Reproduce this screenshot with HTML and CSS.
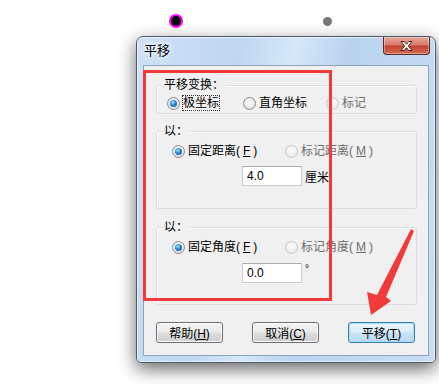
FILE: index.html
```html
<!DOCTYPE html>
<html lang="zh-CN">
<head>
  <meta charset="UTF-8" />
  <title>平移</title>
  <link rel="stylesheet" href="styles.css">
</head>
<body>
  <span class="dot dot-sel"></span>
  <span class="dot dot-grey"></span>

  <div class="window">
    <div class="titlebar">
      <span class="title">平移</span>
      <span class="close">
        <svg width="15" height="12" viewBox="0 0 15 12"><path d="M2 1.5h3.2l2.3 2.8 2.3-2.8H13l-3.7 4.5L13 10.5H9.8L7.5 7.7 5.2 10.5H2l3.7-4.5z" fill="#fff" stroke="#4a2520" stroke-width="1"/></svg>
      </span>
    </div>

    <div class="client">
      <div class="group g1">
        <span class="legend">平移变换：</span>
        <div class="row">
          <label class="opt w76"><span class="radio on"></span><span class="focus">极坐标</span></label>
          <label class="opt w83"><span class="radio"></span>直角坐标</label>
          <label class="opt off"><span class="radio"></span>标记</label>
        </div>
      </div>

      <div class="group g2">
        <span class="legend">以：</span>
        <div class="row r2">
          <label class="opt w113"><span class="radio on"></span>固定距离(<u>F</u>)</label>
          <label class="opt off"><span class="radio"></span>标记距离(<u>M</u>)</label>
        </div>
        <div class="field">
          <input type="text" value="4.0">
          <span class="unit">厘米</span>
        </div>
      </div>

      <div class="group g3">
        <span class="legend">以：</span>
        <div class="row r2">
          <label class="opt w113"><span class="radio on"></span>固定角度(<u>F</u>)</label>
          <label class="opt off"><span class="radio"></span>标记角度(<u>M</u>)</label>
        </div>
        <div class="field f3">
          <input type="text" value="0.0">
          <span class="unit deg">°</span>
        </div>
      </div>

      <div class="buttons">
        <button>帮助(<u>H</u>)</button>
        <button>取消(<u>C</u>)</button>
        <button class="default">平移(<u>T</u>)</button>
      </div>
    </div>
  </div>

  <!-- annotation drawn over the screenshot -->
  <div class="mark"></div>
  <svg class="arrow" width="439" height="384" viewBox="0 0 439 384">
    <polygon points="411,229 414,231 386,297 391,301 371,315 367,292 377,295" fill="#f23a3a"/>
  </svg>
</body>
</html>
```

FILE: styles.css
```css
body {
  margin: 0;
  width: 439px;
  height: 384px;
  background: #fff;
  font-family: "Liberation Sans", "Noto Sans CJK SC", sans-serif;
  font-size: 12px;
  color: #000;
  position: relative;
  overflow: hidden;
}
.dot {
  position: absolute;
  border-radius: 50%;
}
.dot-sel {
  left: 169px;
  top: 14px;
  width: 10px;
  height: 10px;
  background: #000;
  border: 2px solid #f0f;
}
.dot-grey {
  left: 323px;
  top: 17px;
  width: 9px;
  height: 9px;
  background: #777;
}

.window {
  margin: 36px 0 0 136px;
  width: 300px;
  height: 327px;
  box-sizing: border-box;
  border: 1px solid #4c5a6a;
  border-radius: 7px 7px 5px 5px;
  background: linear-gradient(100deg, #cfe2f6 0%, #bfd7f1 30%, #d6e8f9 45%, #b9d3ef 60%, #c9def4 100%);
  box-shadow: 0 6px 18px rgba(0,0,0,0.6), inset 0 0 0 1px rgba(255,255,255,0.6);
  padding: 0 6px 6px;
}
.titlebar {
  height: 28px;
  display: flex;
  justify-content: space-between;
  align-items: flex-start;
}
.title {
  margin: 6px 0 0 1px;
  line-height: 16px;
  font-size: 13px;
  text-shadow: 0 0 6px #fff, 0 0 3px #fff;
}
.close {
  width: 45px;
  height: 17px;
  margin-right: -1px;
  border: 1px solid #5a2a24;
  border-top: 0;
  border-radius: 0 0 4px 4px;
  background: linear-gradient(#e9a99b 0%, #d87a69 45%, #c04530 55%, #d56b55 100%);
  box-shadow: inset 0 0 0 1px rgba(255,255,255,0.35);
  display: flex;
  align-items: center;
  justify-content: center;
}
.client {
  height: 291px;
  box-sizing: border-box;
  background: #f0f0f0;
  border: 1px solid #8ea3bd;
  padding: 19px 0 0 12px;
}

.group {
  position: relative;
  width: 261px;
  box-sizing: border-box;
  border: 1px solid #d9dde2;
  border-radius: 3px;
  box-shadow: inset 1px 1px 0 #fff;
}
.legend {
  position: absolute;
  top: -9px;
  left: 5px;
  padding: 0 2px;
  background: #f0f0f0;
  line-height: 16px;
}
.g1 { height: 29px; padding: 9px 0 0 10px; }
.g2 { height: 78px; margin-top: 17px; padding: 11px 0 0 15px; }
.g3 { height: 78px; margin-top: 18px; padding: 11px 0 0 15px; }

.row {
  display: flex;
  height: 16px;
  line-height: 16px;
}
.opt {
  display: flex;
  align-items: center;
  gap: 3px;
  white-space: nowrap;
}
.w76 { width: 76px; }
.w83 { width: 83px; }
.w113 { width: 113px; }
.off { color: #6d6d6d; }
u { text-decoration: underline; text-underline-offset: 1px; }

.radio {
  width: 11px;
  height: 11px;
  border-radius: 50%;
  border: 1px solid #8b8d8f;
  background: radial-gradient(circle at 50% 40%, #fdfdfd, #d5d7d9);
  position: relative;
  flex: none;
}
.radio.on::after {
  content: "";
  position: absolute;
  left: 2px;
  top: 2px;
  width: 7px;
  height: 7px;
  border-radius: 50%;
  background: radial-gradient(circle at 40% 35%, #a6e4ff 0%, #2a86cf 45%, #0e4c88 100%);
}
.off .radio {
  border-color: #c8c9ca;
  background: radial-gradient(circle at 50% 40%, #fafafa, #e6e6e6);
}
.focus {
  outline: 1px dotted #333;
  outline-offset: 0;
  line-height: 14px;
}

.field {
  display: flex;
  align-items: center;
  margin: 7px 0 0 70px;
  gap: 3px;
}
.f3 { margin-top: 8px; }
.field input {
  width: 60px;
  height: 20px;
  box-sizing: border-box;
  border: 1px solid #c9ccd1;
  border-top-color: #abadb3;
  background: #fff;
  font: 12px "Liberation Sans", "Noto Sans CJK SC", sans-serif;
  padding: 0 4px;
  margin: 0;
}
.deg { align-self: flex-start; font-size: 10px; line-height: 12px; }

.buttons {
  display: flex;
  gap: 29px;
  margin-top: 17px;
}
button {
  width: 67px;
  height: 21px;
  padding: 0;
  border: 1px solid #707070;
  border-radius: 3px;
  background: linear-gradient(#f2f2f2 0%, #ebebeb 48%, #dddddd 52%, #cfcfcf 100%);
  box-shadow: inset 0 0 0 1px #fbfbfb;
  font: 12px "Liberation Sans", "Noto Sans CJK SC", sans-serif;
  color: #000;
}
button.default {
  border-color: #3c7fb1;
  background: linear-gradient(#eaf4fb 0%, #dcecf8 48%, #c9e2f4 52%, #b9d9f0 100%);
  box-shadow: inset 0 0 0 1px #a6dcf8;
}

.mark {
  position: absolute;
  left: 143px;
  top: 70px;
  width: 183px;
  height: 225px;
  border: 3px solid #f23a3a;
}
.arrow {
  position: absolute;
  left: 0;
  top: 0;
}
```
